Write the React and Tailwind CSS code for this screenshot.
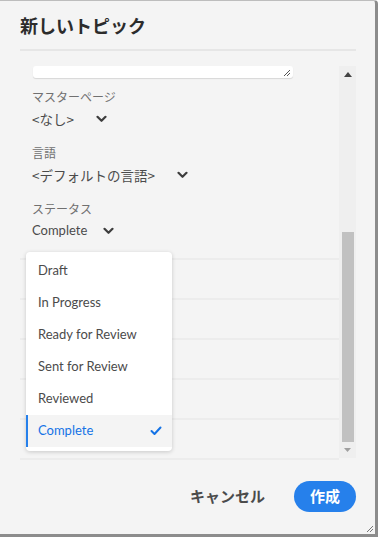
import React from "react";

const Chevron = () => (
  <svg width="11" height="8" viewBox="0 0 11 8" className="shrink-0">
    <path d="M1.5 1.8 L5.5 5.8 L9.5 1.8" fill="none" stroke="#3e3e3e" strokeWidth="2.2" strokeLinecap="round" strokeLinejoin="round" />
  </svg>
);

const latin = { fontFamily: 'Lato, "Noto Sans CJK JP", sans-serif' };

const Field = ({ label, value, gap, lat }) => (
  <div className="flex flex-col">
    <div className="h-[20px] leading-[20px] text-[12px] text-[#707070]">{label}</div>
    <div className="h-[24px] flex items-center text-[#4b4b4b]">
      <span className={lat ? "text-[13px]" : "text-[13.5px]"} style={lat ? latin : undefined}>{value}</span>
      <span className={gap}><Chevron /></span>
    </div>
  </div>
);

const items = ["Draft", "In Progress", "Ready for Review", "Sent for Review", "Reviewed"];

export default function App() {
  return (
    <div
      className="relative w-[378px] h-[537px] bg-[#f4f4f4] border-t border-t-[#bdbdbd] border-r-[3px] border-r-[#8c8c8c] border-b-[3px] border-b-[#8c8c8c] rounded-tr-[4px] overflow-hidden"
      style={{ fontFamily: '"Noto Sans CJK JP", "Noto Sans", sans-serif' }}
    >
      {/* header */}
      <div className="px-5 pt-[10px]">
        <div className="h-[28px] leading-[28px] text-[18px] font-bold text-[#2c2c2c]">新しいトピック</div>
        <div className="mt-[10px] h-[2px] w-[336px] bg-[#e6e6e6]" />
      </div>

      {/* body */}
      <div className="flex pl-5 pt-[15px] h-[410px]">
        <div className="w-[319px] flex flex-col">
          <div className="ml-[13px] w-[260px] h-[12px] bg-white rounded-[3px] shadow-[0_1px_1px_rgba(0,0,0,0.12)] relative">
            <svg width="8" height="8" viewBox="0 0 8 8" className="absolute right-[2px] bottom-[1px]">
              <path d="M1 7 L7 1 M4 7 L7 4" stroke="#555" strokeWidth="1" />
            </svg>
          </div>
          <div className="pl-3 pt-[9px] flex flex-col gap-[12px]">
            <Field label="マスターページ" value="<なし>" gap="ml-[22px]" />
            <Field label="言語" value="<デフォルトの言語>" gap="ml-[22px]" />
            <Field label="ステータス" value="Complete" gap="ml-[16px]" lat />
          </div>
          <div className="mt-[15px] flex flex-col">
            {[0, 1, 2, 3, 4].map((i) => (
              <div key={i} className="h-[40px] border-t-2 border-[#ececec]" />
            ))}
            <div className="border-t-2 border-[#ececec]" />
          </div>
        </div>
        {/* scrollbar */}
        <div className="w-[17px] h-[392px] bg-[#efefef] flex flex-col items-center">
          <div className="h-[16px] flex items-center justify-center">
            <svg width="8" height="5" viewBox="0 0 8 5"><path d="M0 5 L4 0 L8 5 Z" fill="#444" /></svg>
          </div>
          <div className="mt-[150px] w-[12px] h-[210px] bg-[#c1c1c1]" />
          <div className="h-[16px] flex items-center justify-center">
            <svg width="7" height="4" viewBox="0 0 7 4"><path d="M0 0 L7 0 L3.5 4 Z" fill="#a0a0a0" /></svg>
          </div>
        </div>
      </div>

      {/* footer */}
      <div className="flex items-center justify-end pr-[19px] pt-[20px] gap-[29px]">
        <span className="text-[15px] font-bold text-[#4b4b4b]">キャンセル</span>
        <button className="w-[62px] h-[31px] rounded-full bg-[#2680eb] text-white text-[15px] font-bold">作成</button>
      </div>

      {/* resize grip */}
      <svg width="8" height="8" viewBox="0 0 8 8" className="absolute right-[1px] bottom-[1px]">
        <path d="M1 7 L7 1 M4 7 L7 4" stroke="#777" strokeWidth="1" />
      </svg>

      {/* dropdown popover */}
      <div
        className="absolute left-[26px] top-[251px] w-[146px] h-[199px] bg-white rounded-[4px] shadow-[0_1px_4px_rgba(0,0,0,0.18)] pt-[3px] flex flex-col"
        style={latin}
      >
        {items.map((t) => (
          <div key={t} className="h-[32px] flex items-center pl-[12px] text-[13px] text-[#4b4b4b]">{t}</div>
        ))}
        <div className="h-[32px] flex items-center justify-between pl-[10px] pr-[10px] bg-[#f4f4f4] border-l-2 border-[#2680eb] text-[13px] text-[#1473e6]">
          <span>Complete</span>
          <svg width="12" height="10" viewBox="0 0 12 10"><path d="M1.5 5 L4.5 8 L10.5 1.5" fill="none" stroke="#1473e6" strokeWidth="2" strokeLinecap="round" strokeLinejoin="round" /></svg>
        </div>
      </div>
    </div>
  );
}
